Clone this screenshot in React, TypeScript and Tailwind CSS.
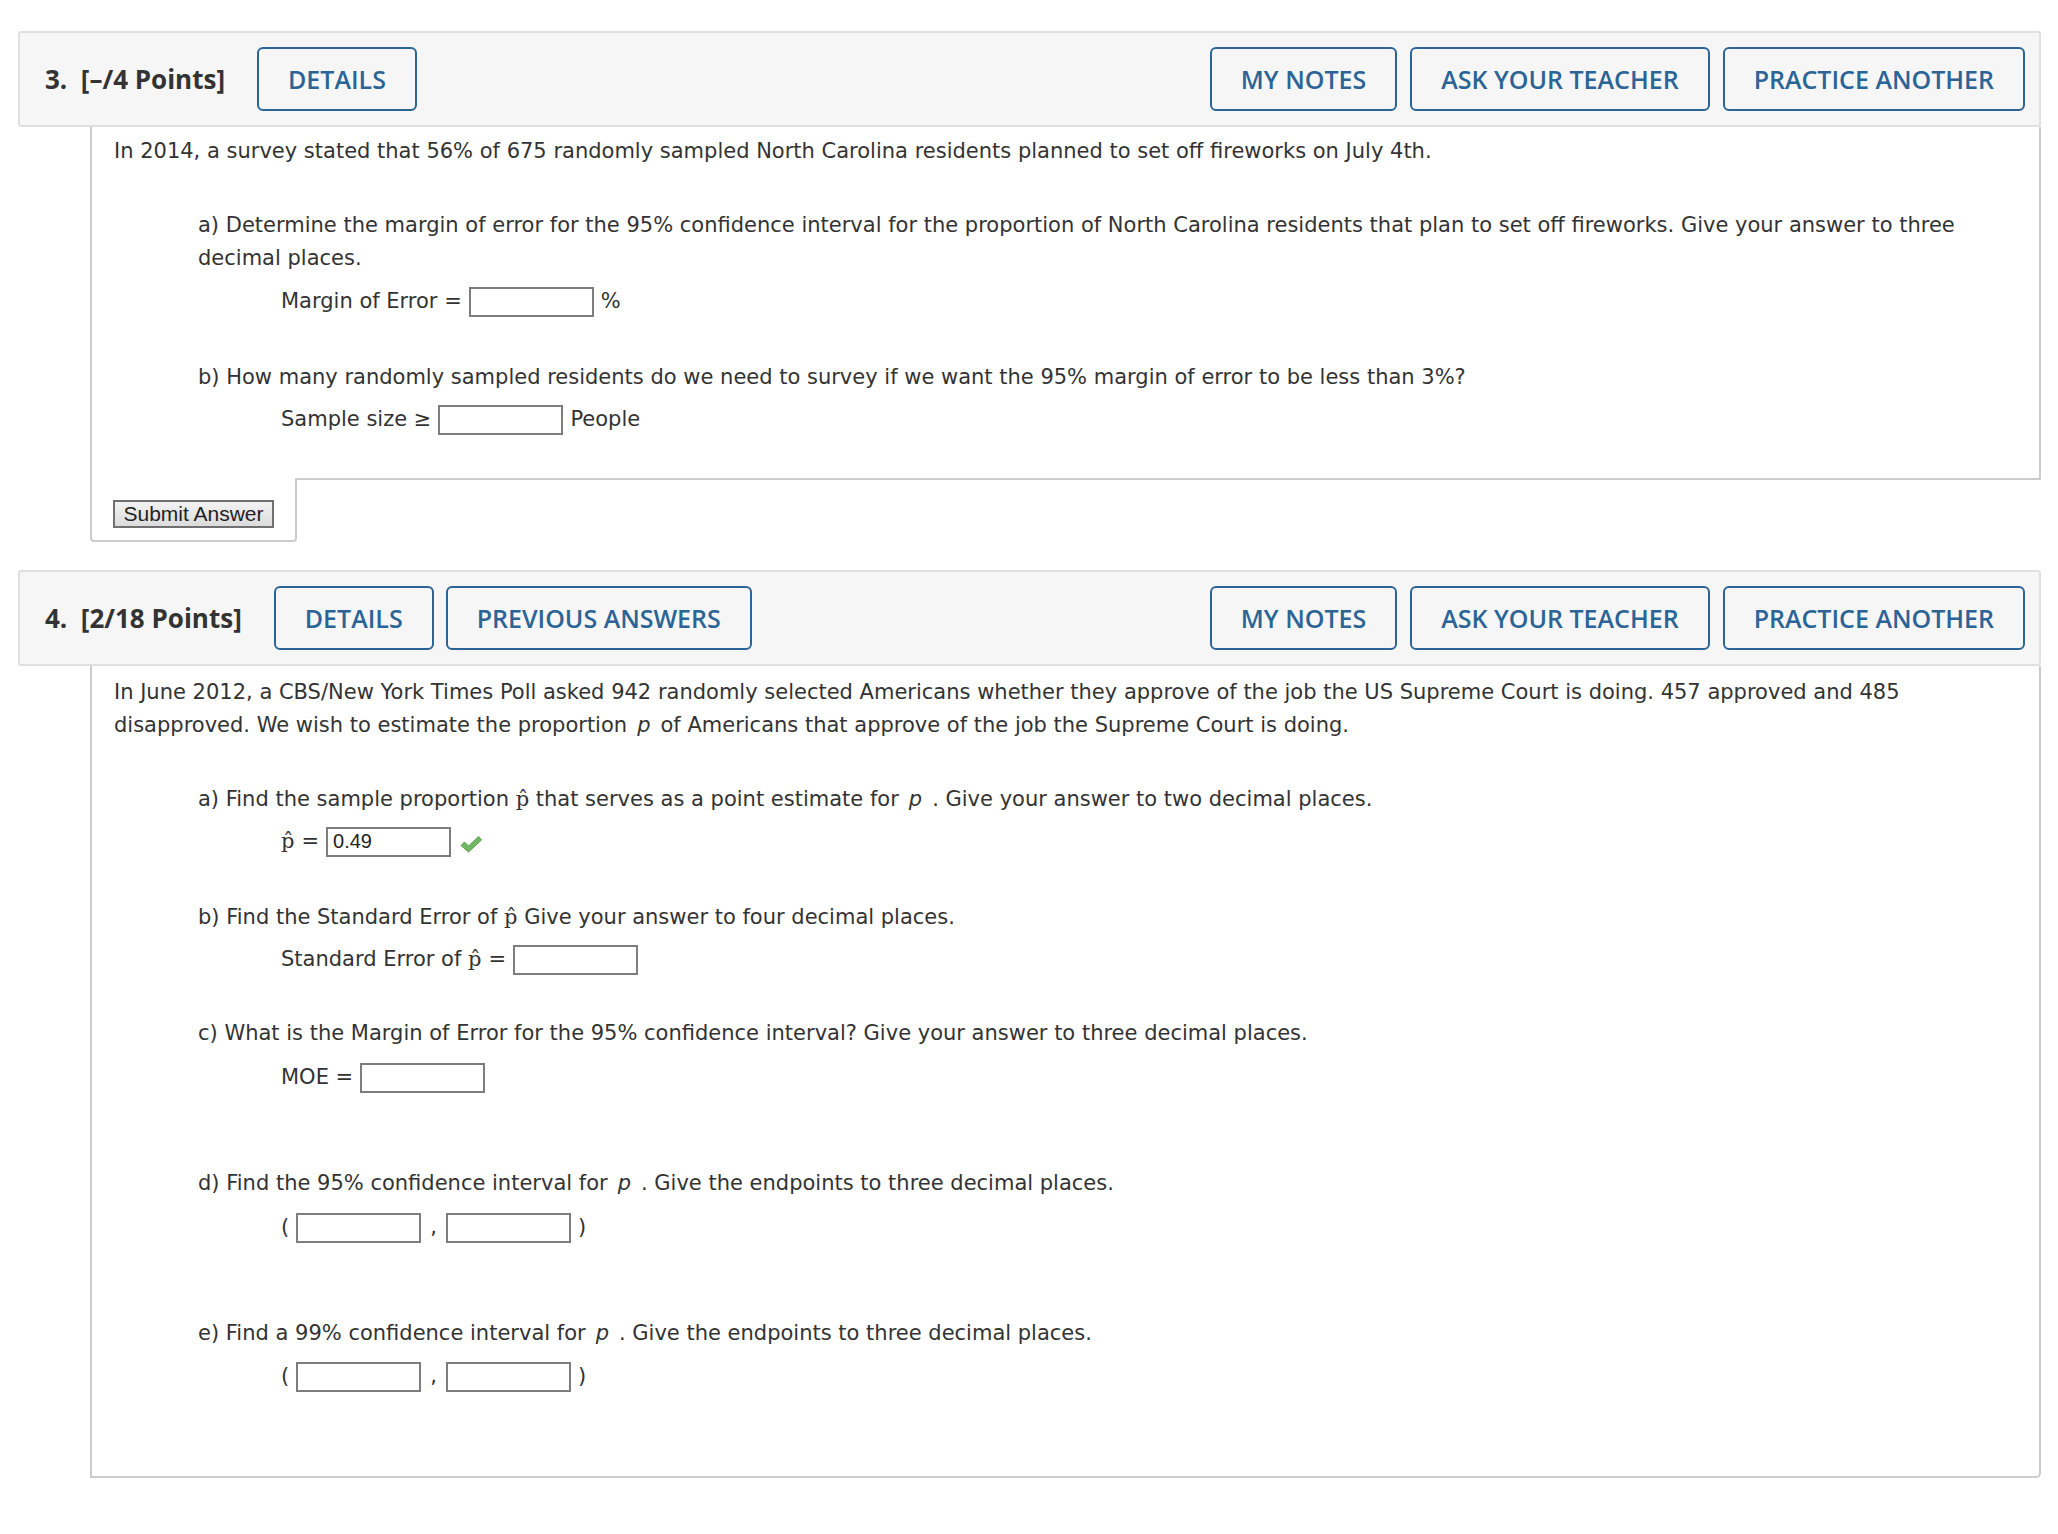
import { ReactNode } from "react";

const body = "font-['DejaVu_Sans',Verdana,sans-serif]";
const head = "font-['Open_Sans',sans-serif]";

function HeaderButton({ text }: { text: string }) {
  return (
    <button
      className={`${head} h-[64px] px-[29px] rounded-[6px] border-2 border-[#2c6496] bg-transparent text-[25px] font-semibold text-[#2c6496] leading-none`}
    >
      {text}
    </button>
  );
}

interface QuestionHeaderProps {
  label: string;
  leftButtons: string[];
}

function QuestionHeader({ label, leftButtons }: QuestionHeaderProps) {
  return (
    <div className="ml-[18px] mr-[17px] h-[96px] flex items-center justify-between border-2 border-[#e0e0e0] rounded-[3px] bg-[#f6f6f6] pl-[25px] pr-[14px]">
      <div className="flex items-center gap-[32px]">
        <span className={`${head} text-[26px] font-bold text-[#333] whitespace-pre`}>{label}</span>
        <div className="flex gap-[12px]">
          {leftButtons.map((b) => (
            <HeaderButton key={b} text={b} />
          ))}
        </div>
      </div>
      <div className="flex gap-[13px]">
        <HeaderButton text="MY NOTES" />
        <HeaderButton text="ASK YOUR TEACHER" />
        <HeaderButton text="PRACTICE ANOTHER" />
      </div>
    </div>
  );
}

function AnswerBox({ value, w = "w-[125px]" }: { value?: string; w?: string }) {
  return (
    <span
      className={`inline-flex items-center ${w} h-[30px] border-2 border-[#7d7d7d] bg-white px-[5px] font-['Liberation_Sans',Arial,sans-serif] text-[20px] text-[#222]`}
    >
      {value}
    </span>
  );
}

function Para({ children, className = "" }: { children: ReactNode; className?: string }) {
  return <p className={`pl-[84px] ${className}`}>{children}</p>;
}

function Row({ children, className = "" }: { children: ReactNode; className?: string }) {
  return <div className={`pl-[167px] h-[33px] flex items-center gap-[7px] ${className}`}>{children}</div>;
}

const PHat = () => (
  <span className="font-['DejaVu_Serif',serif] text-[21px]">p&#770;</span>
);

const ItalicP = () => <i className="mx-[10px]">p</i>;

function Check() {
  return (
    <svg width="24" height="20" viewBox="0 0 24 20" className="ml-[1px] mt-[4px]">
      <path
        d="M2 11.5 L5.5 8 L9.5 12 L19.5 2.5 L22.5 6 L9.5 18 Z"
        fill="#72b862"
        stroke="#55a049"
        strokeWidth="1"
        strokeLinejoin="round"
      />
    </svg>
  );
}

export default function App() {
  return (
    <div className={`w-[2058px] min-h-[1534px] bg-white pt-[31px] ${body} text-[21px] leading-[33px] text-[#333]`}>
      {/* question 3 */}
      <QuestionHeader label={"3.  [–/4 Points]"} leftButtons={["DETAILS"]} />
      <div className="ml-[90px] mr-[17px]">
        <div className="border-x-2 border-[#cccccc] pt-[8px] pb-[42px] pl-[22px] pr-[48px]">
          <p>
            In 2014, a survey stated that 56% of 675 randomly sampled North Carolina residents planned to set off
            fireworks on July 4th.
          </p>
          <Para className="mt-[41px]">
            a) Determine the margin of error for the 95% confidence interval for the proportion of North Carolina
            residents that plan to set off fireworks. Give your answer to three decimal places.
          </Para>
          <Row className="mt-[10px]">
            <span>Margin of Error =</span>
            <AnswerBox />
            <span>%</span>
          </Row>
          <Para className="mt-[43px]">
            b) How many randomly sampled residents do we need to survey if we want the 95% margin of error to be less
            than 3%?
          </Para>
          <Row className="mt-[9px]">
            <span>Sample size ≥</span>
            <AnswerBox />
            <span>People</span>
          </Row>
        </div>
        <div className="flex">
          <div className="w-[207px] h-[64px] border-x-2 border-b-2 border-[#cccccc] rounded-b-[4px] pl-[21px] pt-[20px]">
            <button className="w-[161px] h-[28px] border-2 border-[#707070] bg-gradient-to-b from-[#f2f2f2] to-[#dcdcdc] font-['Liberation_Sans',Arial,sans-serif] text-[21px] leading-none text-[#222]">
              Submit Answer
            </button>
          </div>
          <div className="flex-1 h-[2px] bg-[#cccccc] rounded-r-[2px]" />
        </div>
      </div>

      {/* question 4 */}
      <div className="mt-[28px]">
        <QuestionHeader label={"4.  [2/18 Points]"} leftButtons={["DETAILS", "PREVIOUS ANSWERS"]} />
      </div>
      <div className="ml-[90px] mr-[17px] border-x-2 border-b-2 border-[#cccccc] rounded-br-[5px] pt-[10px] pb-[83px] pl-[22px] pr-[48px]">
        <p>
          In June 2012, a CBS/New York Times Poll asked 942 randomly selected Americans whether they approve of the job
          the US Supreme Court is doing. 457 approved and 485 disapproved. We wish to estimate the proportion
          <ItalicP />
          of Americans that approve of the job the Supreme Court is doing.
        </p>
        <Para className="mt-[41px]">
          a) Find the sample proportion <PHat /> that serves as a point estimate for
          <ItalicP />. Give your answer to two decimal places.
        </Para>
        <Row className="mt-[9px]">
          <PHat />
          <span>=</span>
          <AnswerBox value="0.49" />
          <Check />
        </Row>
        <Para className="mt-[43px]">
          b) Find the Standard Error of <PHat /> Give your answer to four decimal places.
        </Para>
        <Row className="mt-[9px]">
          <span>
            Standard Error of <PHat />
          </span>
          <span>=</span>
          <AnswerBox />
        </Row>
        <Para className="mt-[41px]">
          c) What is the Margin of Error for the 95% confidence interval? Give your answer to three decimal places.
        </Para>
        <Row className="mt-[11px]">
          <span>MOE =</span>
          <AnswerBox />
        </Row>
        <Para className="mt-[73px]">
          d) Find the 95% confidence interval for
          <ItalicP />. Give the endpoints to three decimal places.
        </Para>
        <Row className="mt-[11px] gap-[5px]">
          <span>(</span>
          <AnswerBox />
          <span className="px-[2px]">,</span>
          <AnswerBox />
          <span>)</span>
        </Row>
        <Para className="mt-[73px]">
          e) Find a 99% confidence interval for
          <ItalicP />. Give the endpoints to three decimal places.
        </Para>
        <Row className="mt-[10px] gap-[5px]">
          <span>(</span>
          <AnswerBox />
          <span className="px-[2px]">,</span>
          <AnswerBox />
          <span>)</span>
        </Row>
      </div>
    </div>
  );
}
